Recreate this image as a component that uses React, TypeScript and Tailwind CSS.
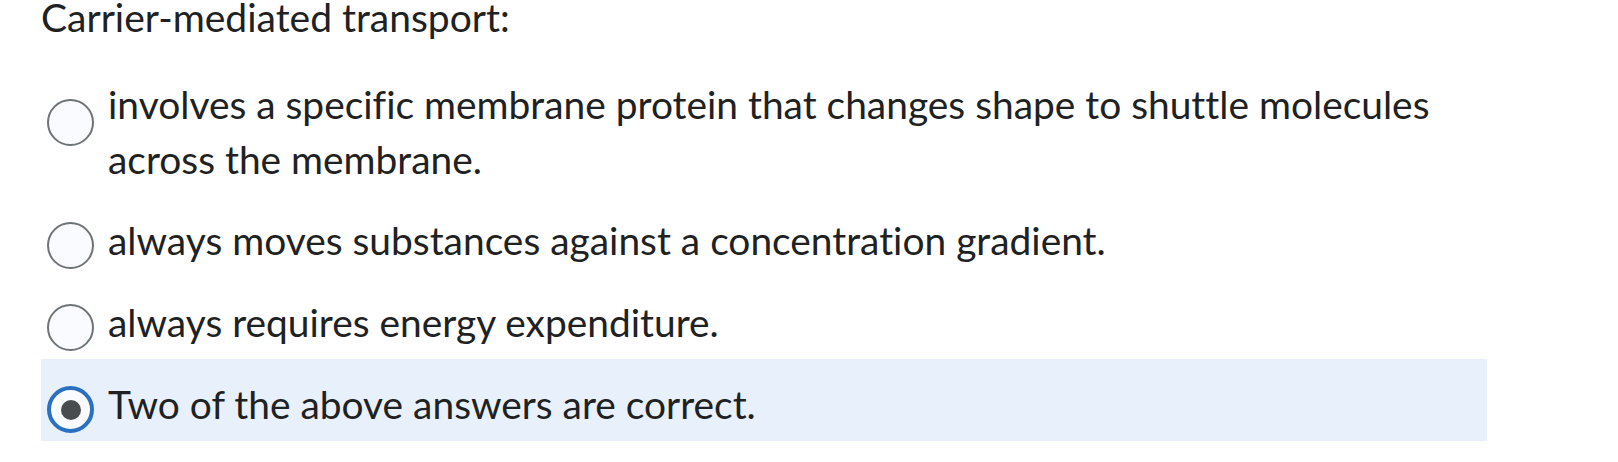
import React from 'react';

type Option = {
  id: number;
  label: string;
  selected?: boolean;
  radioTop: string;
};

const options: Option[] = [
  {
    id: 1,
    label: 'involves a specific membrane protein that changes shape to shuttle molecules across the membrane.',
    radioTop: 'mt-[22px]',
  },
  { id: 2, label: 'always moves substances against a concentration gradient.', radioTop: 'mt-[9px]' },
  { id: 3, label: 'always requires energy expenditure.', radioTop: 'mt-[9px]' },
  { id: 4, label: 'Two of the above answers are correct.', selected: true, radioTop: 'mt-[9px]' },
];

const Radio: React.FC<{ selected?: boolean; className: string }> = ({ selected, className }) => {
  if (selected) {
    return (
      <span
        className={`flex-shrink-0 w-[47px] h-[47px] rounded-full border-[4px] border-[#2b6fc1] bg-[#f9fbff] flex items-center justify-center ${className}`}
      >
        <span className="block w-[20px] h-[20px] rounded-full bg-[#494c4e]" />
      </span>
    );
  }
  return (
    <span
      className={`flex-shrink-0 w-[47px] h-[47px] rounded-full border-[2px] border-[#6e7376] bg-[#f9fbff] ${className}`}
    />
  );
};

export default function App() {
  return (
    <div className="min-h-screen bg-white text-[#202122] font-['Lato',sans-serif] [font-variant-ligatures:none]">
      <div className="pl-[41px]">
        {/* Question */}
        <h2 className="text-[39px] leading-[34px] font-normal">Carrier-mediated transport:</h2>

        {/* Answers */}
        <div className="mt-[25px] w-[1446px]">
          {options.map((opt) => (
            <label
              key={opt.id}
              className={`flex items-start gap-[14px] pl-[6px] pr-[40px] pt-[18px] pb-[8px] ${
                opt.selected ? 'bg-[#e8f1fb] pb-[7px]' : ''
              }`}
            >
              <Radio selected={opt.selected} className={opt.radioTop} />
              <span className="text-[38.9px] leading-[55px] max-w-[1340px]">{opt.label}</span>
            </label>
          ))}
        </div>
      </div>
    </div>
  );
}
